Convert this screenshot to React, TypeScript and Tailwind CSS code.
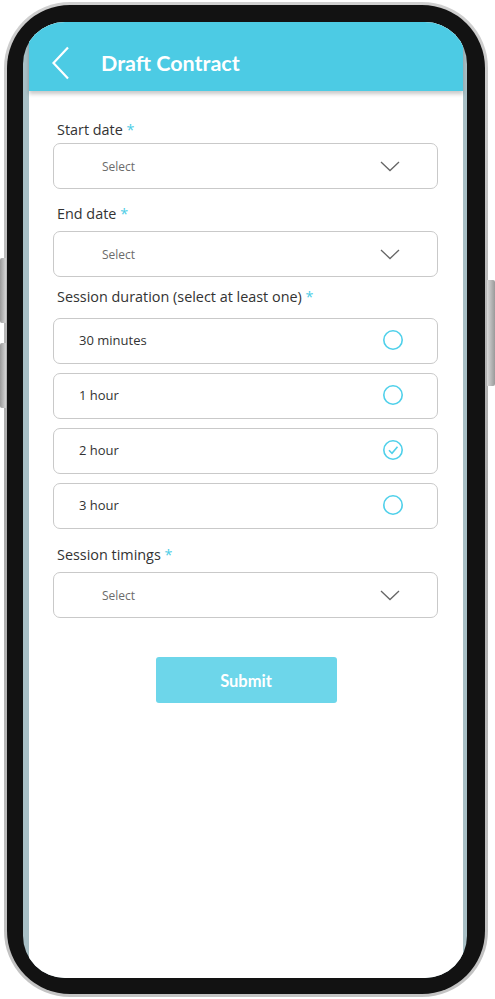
import { useState } from "react";

const font = { fontFamily: '"Open Sans", "Noto Sans", sans-serif' };

function Label({ text, className }: { text: string; className: string }) {
  return (
    <div className={`ml-[28px] h-[20px] text-[14.4px] leading-[20px] text-[#333] ${className}`}>
      {text} <span className="text-[#4dcde6]">*</span>
    </div>
  );
}

function SelectBox({ className }: { className: string }) {
  return (
    <div
      className={`ml-[24px] mr-[25px] flex h-[46px] items-center rounded-[7px] border border-[#c9c9c9] bg-white pl-[48px] pr-[37px] ${className}`}
    >
      <span className="flex-1 pt-[2px] text-[12px] text-[#6b6b6b]">Select</span>
      <svg width="20" height="11" viewBox="0 0 20 11" fill="none" className="mt-[1px]">
        <path d="M1 1l9 8.5L19 1" stroke="#666" strokeWidth="1.3" />
      </svg>
    </div>
  );
}

function Option({ text, checked, className, onClick }: { text: string; checked: boolean; className: string; onClick: () => void }) {
  return (
    <div
      onClick={onClick}
      className={`ml-[24px] mr-[25px] flex h-[46px] items-center rounded-[7px] border border-[#c9c9c9] bg-white pl-[25px] pr-[33px] ${className}`}
    >
      <span className="flex-1 text-[13px] text-[#333]">{text}</span>
      <svg width="22" height="22" viewBox="0 0 22 22" fill="none" className="mb-[3px]">
        <circle cx="11" cy="11" r="9.2" stroke="#4fd0ea" strokeWidth="1.6" />
        {checked && <path d="M7 11.2l3 3 5.5-6.4" stroke="#4fd0ea" strokeWidth="1.6" />}
      </svg>
    </div>
  );
}

export default function App() {
  const [picked, setPicked] = useState("2 hour");
  const options = ["30 minutes", "1 hour", "2 hour", "3 hour"];

  return (
    <div className="relative h-[999px] w-[495px] overflow-hidden bg-white" style={font}>
      {/* side buttons */}
      <div className="absolute left-0 top-[258px] h-[65px] w-[6px] rounded-l-[2px] bg-gradient-to-r from-[#9a9a9a] to-[#d6d6d6]" />
      <div className="absolute left-0 top-[343px] h-[65px] w-[6px] rounded-l-[2px] bg-gradient-to-r from-[#9a9a9a] to-[#d6d6d6]" />
      <div className="absolute right-0 top-[280px] h-[106px] w-[8px] rounded-r-[2px] bg-gradient-to-l from-[#9a9a9a] to-[#d9d9d9]" />

      <div className="ml-[4px] mt-[2px] h-[995px] w-[484px] rounded-[66px] bg-gradient-to-b from-[#d0d0d0] via-[#a9a9a9] to-[#c4c4c4] p-[3px]">
        <div className="h-full w-full rounded-[63px] bg-[#121212] pb-[16px] pl-[16px] pr-[18px] pt-[17px]">
          <div className="h-full w-full overflow-hidden rounded-[42px] bg-[#a8bfc5] pl-[6px] pr-[4px]">
            <div className="h-full w-full bg-white">
              <div className="relative z-10 flex h-[69px] items-center bg-[#4ccbe4] pt-[14px] shadow-[0_3px_4px_rgba(0,0,0,0.22)]">
                <svg width="20" height="34" viewBox="0 0 20 34" fill="none" className="ml-[22px] mb-[2px]">
                  <path d="M17 1.5L2.5 17 17 32.5" stroke="white" strokeWidth="2.2" />
                </svg>
                <span
                  className="ml-[30px] text-[21.5px] font-bold text-white"
                  style={{ fontFamily: 'Lato, "Open Sans", sans-serif' }}
                >
                  Draft Contract
                </span>
              </div>

              <Label text="Start date" className="mt-[29px]" />
              <SelectBox className="mt-[3px]" />
              <Label text="End date" className="mt-[15px]" />
              <SelectBox className="mt-[7px]" />
              <Label text="Session duration (select at least one)" className="mt-[10px]" />
              {options.map((o, i) => (
                <Option
                  key={o}
                  text={o}
                  checked={picked === o}
                  onClick={() => setPicked(o)}
                  className={i === 0 ? "mt-[11px]" : "mt-[9px]"}
                />
              ))}
              <Label text="Session timings" className="mt-[16px]" />
              <SelectBox className="mt-[7px]" />

              <div className="mt-[39px] flex justify-center">
                <button
                  className="h-[46px] w-[181px] rounded-[3px] bg-[#6dd6ea] pt-[3px] text-[16.5px] font-bold text-white"
                  style={{ fontFamily: 'Lato, "Open Sans", sans-serif' }}
                >
                  Submit
                </button>
              </div>
            </div>
          </div>
        </div>
      </div>
    </div>
  );
}
